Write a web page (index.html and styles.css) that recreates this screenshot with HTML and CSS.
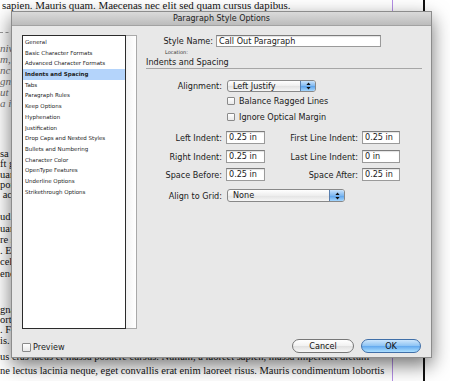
FILE: index.html
```html
<!DOCTYPE html>
<html>
<head>
<meta charset="utf-8">
<title>Paragraph Style Options</title>
<link rel="stylesheet" href="styles.css">
</head>
<body>
<div class="page">
  <div class="column">
    <div class="ln top">sapien. Mauris quam. Maecenas nec elit sed quam cursus dapibus.</div>
    <div class="rule"></div>
    <div class="quote">
      <div class="ln">nivi</div>
      <div class="ln">m, v</div>
      <div class="ln">nc p</div>
      <div class="ln">gnis</div>
      <div class="ln">ut el</div>
      <div class="ln">a in</div>
    </div>
    <div class="para p1">
      <div class="ln">sa m</div>
      <div class="ln">ft gr</div>
      <div class="ln">uam</div>
      <div class="ln">pon</div>
      <div class="ln">&nbsp;ac</div>
    </div>
    <div class="para p2">
      <div class="ln">ud lo</div>
      <div class="ln">uam</div>
      <div class="ln">re si</div>
      <div class="ln">. Eti</div>
      <div class="ln">celer</div>
      <div class="ln">enor</div>
    </div>
    <div class="para p3">
      <div class="ln">gna</div>
      <div class="ln">ortis</div>
      <div class="ln">. Fus</div>
      <div class="ln">is. N</div>
      <div class="ln">us cras lacus et massa posuere cursus. Nullam, a laoreet sapien, massa imperdiet dictum</div>
    </div>
    <div class="para p4">
      <div class="ln">ne lectus lacinia neque, eget convallis erat enim laoreet risus. Mauris condimentum lobortis</div>
      <div class="ln">nisi, id lorem mauris et massa vehicula. Fusce sed nisl at urna aliquet lacinia. Mauris</div>
    </div>
  </div>
</div>

<div class="dialog">
  <div class="titlebar">Paragraph Style Options</div>
  <div class="body">
    <div class="main">
      <div class="listbox">
        <ul class="items">
          <li>General</li>
          <li>Basic Character Formats</li>
          <li>Advanced Character Formats</li>
          <li class="sel">Indents and Spacing</li>
          <li>Tabs</li>
          <li>Paragraph Rules</li>
          <li>Keep Options</li>
          <li>Hyphenation</li>
          <li>Justification</li>
          <li>Drop Caps and Nested Styles</li>
          <li>Bullets and Numbering</li>
          <li>Character Color</li>
          <li>OpenType Features</li>
          <li>Underline Options</li>
          <li>Strikethrough Options</li>
        </ul>
        <div class="scroll"></div>
      </div>
      <div class="pane">
        <div class="name-row">
          <span class="name-label">Style Name:</span>
          <span class="field name-field">Call Out Paragraph</span>
        </div>
        <div class="location">Location:</div>
        <div class="section">Indents and Spacing</div>
        <div class="row align-row">
          <span class="lab">Alignment:</span>
          <span class="popup align-pop"><span class="pv">Left Justify</span><span class="step"><svg width="5" height="8" viewBox="0 0 5 8"><path d="M2.5 0.5 L4.6 3 L0.4 3 Z M2.5 7.5 L4.6 5 L0.4 5 Z" fill="#111"/></svg></span></span>
        </div>
        <div class="check-row c1"><span class="box"></span><span>Balance Ragged Lines</span></div>
        <div class="check-row c2"><span class="box"></span><span>Ignore Optical Margin</span></div>
        <div class="row vrow r1">
          <span class="lab">Left Indent:</span><span class="field num">0.25 in</span>
          <span class="lab2">First Line Indent:</span><span class="field num2">0.25 in</span>
        </div>
        <div class="row vrow r2">
          <span class="lab">Right Indent:</span><span class="field num">0.25 in</span>
          <span class="lab2">Last Line Indent:</span><span class="field num2">0 in</span>
        </div>
        <div class="row vrow r3">
          <span class="lab">Space Before:</span><span class="field num">0.25 in</span>
          <span class="lab2">Space After:</span><span class="field num2">0.25 in</span>
        </div>
        <div class="row vrow r4">
          <span class="lab">Align to Grid:</span>
          <span class="popup grid-pop"><span class="pv">None</span><span class="step"><svg width="5" height="8" viewBox="0 0 5 8"><path d="M2.5 0.5 L4.6 3 L0.4 3 Z M2.5 7.5 L4.6 5 L0.4 5 Z" fill="#111"/></svg></span></span>
        </div>
      </div>
    </div>
    <div class="footer">
      <div class="preview"><span class="box pbox"></span><span>Preview</span></div>
      <div class="buttons">
        <span class="btn cancel">Cancel</span>
        <span class="btn ok">OK</span>
      </div>
    </div>
  </div>
</div>
</body>
</html>
```

FILE: styles.css
```css
html, body {
  margin: 0;
  padding: 0;
  background: #ffffff;
  width: 450px;
  height: 381px;
  overflow: hidden;
}

.page {
  width: 423px;
  height: 381px;
  border-right: 2px solid #111;
  box-sizing: content-box;
}

.column {
  width: 392px;
  height: 381px;
  border-right: 1px solid #b48ee6;
  font-family: "Liberation Serif", "Times New Roman", serif;
  color: #141414;
  overflow: hidden;
}

.ln {
  white-space: nowrap;
  overflow: hidden;
}

.top {
  font-size: 10.9px;
  line-height: 11px;
  padding-left: 2px;
}

.rule {
  margin-top: 21px;
  width: 14px;
  border-top: 1px dashed #9a9a9a;
}

.quote {
  margin-top: 10px;
  font-style: italic;
  color: #6f6f6f;
  font-size: 11px;
  line-height: 11px;
}

.para {
  font-size: 10.5px;
  line-height: 10.3px;
}

.p1 { margin-top: 40px; }
.p2 { margin-top: 11px; line-height: 11.2px; }
.p3 { margin-top: 26px; }
.p3 .ln:last-child { margin-top: 6px; }
.p4 { margin-top: 2px; line-height: 13.5px; }

/* Dialog */
.dialog {
  position: absolute;
  left: 11px;
  top: 11px;
  width: 421px;
  height: 347px;
  box-sizing: border-box;
  border: 1px solid #8c8c8c;
  background: #e8e8e8;
  box-shadow: 0 7px 18px rgba(0, 0, 0, 0.55);
  font-family: "DejaVu Sans", "Noto Sans", sans-serif;
  color: #1a1a1a;
  display: flex;
  flex-direction: column;
}

.titlebar {
  height: 13px;
  line-height: 13px;
  text-align: center;
  font-size: 8px;
  color: #222;
  background: linear-gradient(#dadada, #bcbcbc);
  border-bottom: 1px solid #a2a2a2;
}

.body {
  flex: 1;
  padding: 9px 9px 0 10px;
  display: flex;
  flex-direction: column;
}

.main {
  display: flex;
}

.listbox {
  width: 115px;
  height: 294px;
  display: flex;
}

.items {
  list-style: none;
  margin: 0;
  padding: 1px 0 0 0;
  flex: 1;
  background: #fff;
  border: 1px solid #2b2b2b;
  font-size: 5.5px;
  color: #1c1c1c;
}

.items li {
  height: 10.7px;
  line-height: 10.7px;
  padding-left: 2px;
  white-space: nowrap;
}

.items li.sel {
  background: #b4d4fb;
  font-weight: bold;
}

.scroll {
  width: 10px;
  background: linear-gradient(90deg, #f2f2f2, #ffffff);
  border: 1px solid #a9a9a9;
  border-left: none;
}

.pane {
  margin-left: 9px;
  width: 276px;
  font-size: 8.1px;
}

.name-row {
  display: flex;
  align-items: center;
  height: 12px;
}

.name-label {
  width: 67px;
  text-align: right;
  margin-right: 3px;
}

.field {
  display: inline-block;
  box-sizing: border-box;
  background: #fff;
  border: 1px solid #9a9a9a;
  border-top-color: #7c7c7c;
  box-shadow: inset 0 1px 1px rgba(0, 0, 0, 0.12);
  padding-left: 2px;
  white-space: nowrap;
}

.name-field {
  width: 165px;
  height: 12px;
  line-height: 10px;
}

.location {
  margin-top: 1px;
  margin-left: 19px;
  height: 8px;
  line-height: 8px;
  font-size: 5px;
  color: #333;
}

.section {
  height: 12px;
  line-height: 12px;
  border-bottom: 1px solid #a6a6a6;
}

.row {
  display: flex;
  align-items: center;
}

.lab {
  width: 76px;
  text-align: right;
  white-space: nowrap;
}

.align-row {
  margin-top: 11px;
  height: 12px;
}

.popup {
  display: flex;
  box-sizing: border-box;
  margin-left: 5px;
  height: 12px;
  border: 1px solid #888;
  border-radius: 3px;
  background: linear-gradient(#ffffff, #eeeeee 50%, #e2e2e2 51%, #f6f6f6);
  overflow: hidden;
}

.align-pop { width: 89px; }

.grid-pop {
  width: 118px;
  height: 13px;
}

.pv {
  flex: 1;
  padding-left: 5px;
  line-height: 10px;
  white-space: nowrap;
}

.grid-pop .pv { line-height: 11px; }

.step {
  width: 14px;
  display: flex;
  align-items: center;
  justify-content: center;
  background: linear-gradient(#c9e3fb, #7fb8f0 50%, #5aa1ea 51%, #a5d6fd);
  border-left: 1px solid #5a7fae;
}

.check-row {
  display: flex;
  align-items: center;
  height: 8px;
  margin-left: 81px;
  white-space: nowrap;
}

.c1 { margin-top: 5px; }
.c2 { margin-top: 8px; }

.box {
  display: inline-block;
  box-sizing: border-box;
  width: 8px;
  height: 8px;
  margin-right: 4px;
  border: 1px solid #8a8a8a;
  border-radius: 1px;
  background: linear-gradient(#ffffff, #e9e9e9);
}

.vrow { height: 13px; }
.r1 { margin-top: 10px; }
.r2 { margin-top: 6px; }
.r3 { margin-top: 5px; }
.r4 { margin-top: 8px; }

.num {
  margin-left: 4px;
  width: 39px;
  height: 13px;
  line-height: 11px;
}

.lab2 {
  width: 93px;
  text-align: right;
  white-space: nowrap;
}

.num2 {
  margin-left: 4px;
  width: 38px;
  height: 13px;
  line-height: 11px;
}

.footer {
  display: flex;
  align-items: center;
  justify-content: space-between;
  margin-top: 10px;
  height: 14px;
  font-size: 8.1px;
}

.preview {
  display: flex;
  align-items: center;
  margin-top: 2px;
}

.pbox {
  width: 9px;
  height: 9px;
  margin-right: 2px;
}

.buttons {
  display: flex;
  gap: 7px;
  margin-right: 1px;
}

.btn {
  box-sizing: border-box;
  height: 14px;
  line-height: 12px;
  text-align: center;
  border-radius: 7px;
  color: #111;
}

.cancel {
  width: 62px;
  border: 1px solid #777;
  background: linear-gradient(#ffffff, #f1f1f1 50%, #e0e0e0 51%, #f7f7f7);
}

.ok {
  width: 60px;
  border: 1px solid #406fa8;
  background: linear-gradient(#cde6fc, #8cc3f4 50%, #62a8ee 51%, #ace0ff);
}
```
